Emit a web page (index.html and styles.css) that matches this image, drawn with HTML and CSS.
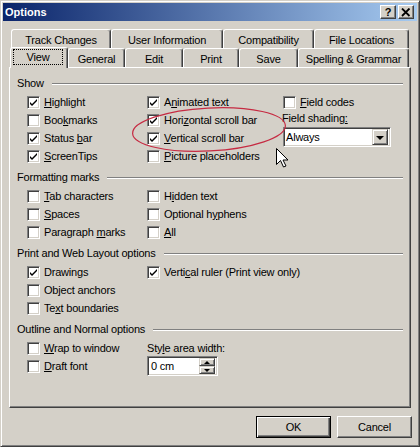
FILE: index.html
```html
<!DOCTYPE html>
<html>
<head>
<meta charset="utf-8">
<link rel="stylesheet" href="styles.css">
</head>
<body>
<div class="window">
  <div class="titlebar">
    <span class="title">Options</span>
    <div class="tbtns">
      <span class="tbtn q">?</span>
      <span class="tbtn"><svg width="10" height="9" viewBox="0 0 10 9"><path d="M1 0.5 L8.5 8 M8.5 0.5 L1 8" stroke="#000" stroke-width="1.8"/></svg></span>
    </div>
  </div>

  <div class="tabs">
    <div class="tabrow back">
      <div class="tab w-tc">Track Changes</div>
      <div class="tab w-ui">User Information</div>
      <div class="tab w-co">Compatibility</div>
      <div class="tab w-fl">File Locations</div>
    </div>
    <div class="tabrow front">
      <div class="tab sel w-vi"><span class="focus">View</span></div>
      <div class="tab w-ge">General</div>
      <div class="tab w-ed">Edit</div>
      <div class="tab w-pr">Print</div>
      <div class="tab w-sa">Save</div>
      <div class="tab w-sg">Spelling &amp; Grammar</div>
    </div>
  </div>

  <div class="panel">
    <div class="group">
      <div class="glabel"><span>Show</span></div>
      <div class="grid">
        <div class="col">
          <div class="cb"><span class="box on"><svg viewBox="0 0 11 11"><path d="M2 5 L4 7 L9 2 L9 4 L4 9 L2 7 Z"/></svg></span><span><u>H</u>ighlight</span></div>
          <div class="cb"><span class="box"></span><span>Boo<u>k</u>marks</span></div>
          <div class="cb"><span class="box on"><svg viewBox="0 0 11 11"><path d="M2 5 L4 7 L9 2 L9 4 L4 9 L2 7 Z"/></svg></span><span>Status <u>b</u>ar</span></div>
          <div class="cb"><span class="box on"><svg viewBox="0 0 11 11"><path d="M2 5 L4 7 L9 2 L9 4 L4 9 L2 7 Z"/></svg></span><span><u>S</u>creenTips</span></div>
        </div>
        <div class="col">
          <div class="cb"><span class="box on"><svg viewBox="0 0 11 11"><path d="M2 5 L4 7 L9 2 L9 4 L4 9 L2 7 Z"/></svg></span><span>A<u>n</u>imated text</span></div>
          <div class="cb"><span class="box on"><svg viewBox="0 0 11 11"><path d="M2 5 L4 7 L9 2 L9 4 L4 9 L2 7 Z"/></svg></span><span>Hori<u>z</u>ontal scroll bar</span></div>
          <div class="cb"><span class="box on"><svg viewBox="0 0 11 11"><path d="M2 5 L4 7 L9 2 L9 4 L4 9 L2 7 Z"/></svg></span><span><u>V</u>ertical scroll bar</span></div>
          <div class="cb"><span class="box"></span><span><u>P</u>icture placeholders</span></div>
        </div>
        <div class="col">
          <div class="cb c3"><span class="box"></span><span><u>F</u>ield codes</span></div>
          <div class="flabel">Field shading<u>:</u></div>
          <div class="select">
            <span class="seltext">Always</span>
            <span class="arrowbtn"><span class="tri"></span></span>
          </div>
        </div>
      </div>
    </div>

    <div class="group">
      <div class="glabel"><span>Formatting marks</span></div>
      <div class="grid">
        <div class="col">
          <div class="cb"><span class="box"></span><span><u>T</u>ab characters</span></div>
          <div class="cb"><span class="box"></span><span><u>S</u>paces</span></div>
          <div class="cb"><span class="box"></span><span>Paragraph <u>m</u>arks</span></div>
        </div>
        <div class="col">
          <div class="cb"><span class="box"></span><span>H<u>i</u>dden text</span></div>
          <div class="cb"><span class="box"></span><span>Optional h<u>y</u>phens</span></div>
          <div class="cb"><span class="box"></span><span><u>A</u>ll</span></div>
        </div>
      </div>
    </div>

    <div class="group">
      <div class="glabel"><span>Print and Web Layout options</span></div>
      <div class="grid">
        <div class="col">
          <div class="cb"><span class="box on"><svg viewBox="0 0 11 11"><path d="M2 5 L4 7 L9 2 L9 4 L4 9 L2 7 Z"/></svg></span><span>Drawin<u>g</u>s</span></div>
          <div class="cb"><span class="box"></span><span>Ob<u>j</u>ect anchors</span></div>
          <div class="cb"><span class="box"></span><span>Te<u>x</u>t boundaries</span></div>
        </div>
        <div class="col">
          <div class="cb"><span class="box on"><svg viewBox="0 0 11 11"><path d="M2 5 L4 7 L9 2 L9 4 L4 9 L2 7 Z"/></svg></span><span>Verti<u>c</u>al ruler (Print view only)</span></div>
        </div>
      </div>
    </div>

    <div class="group">
      <div class="glabel"><span>Outline and Normal options</span></div>
      <div class="grid">
        <div class="col">
          <div class="cb"><span class="box"></span><span><u>W</u>rap to window</span></div>
          <div class="cb"><span class="box"></span><span><u>D</u>raft font</span></div>
        </div>
        <div class="col">
          <div class="slabel">Sty<u>l</u>e area width:</div>
          <div class="spin">
            <span class="spintext">0 cm</span>
            <span class="spinbtns">
              <span class="sbtn"><span class="tri up"></span></span>
              <span class="sbtn"><span class="tri small"></span></span>
            </span>
          </div>
        </div>
      </div>
    </div>
  </div>

  <div class="buttons">
    <button class="btn default">OK</button>
    <button class="btn">Cancel</button>
  </div>

  <svg class="overlay" width="420" height="447" viewBox="0 0 420 447">
    <ellipse cx="209" cy="129.5" rx="76.5" ry="21.5" transform="rotate(-3 209 129.5)" fill="none" stroke="#C62a42" stroke-width="1.2"/>
    <path transform="translate(276.5 148.5)" d="M0 0 V16 L4 12 L7 18.5 L9.5 17.5 L6.5 11.5 H11.5 Z" fill="#fff" stroke="#000" stroke-width="1" stroke-linejoin="miter"/>
  </svg>
</div>
</body>
</html>
```

FILE: styles.css
```css
html, body {
  margin: 0;
  padding: 0;
  background: #D4D0C8;
}

.window {
  position: relative;
  box-sizing: border-box;
  width: 420px;
  height: 447px;
  background: #D4D0C8;
  border: 1px solid;
  border-color: #D4D0C8 #404040 #404040 #D4D0C8;
  box-shadow: inset 1px 1px #fff, inset -1px -1px #808080;
  padding: 2px;
  font-family: "Liberation Sans", Arial, sans-serif;
  font-size: 11px;
  letter-spacing: -0.2px;
  color: #000;
}

.titlebar {
  height: 18px;
  display: flex;
  align-items: center;
  justify-content: space-between;
  background: linear-gradient(to right, #0A246A, #A6CAF0);
  padding: 0 3px 0 2px;
}

.title {
  color: #fff;
  font-weight: bold;
  font-size: 11px;
  letter-spacing: 0;
}

.tbtns {
  display: flex;
  gap: 2px;
}

.tbtn {
  box-sizing: border-box;
  width: 16px;
  height: 14px;
  background: #D4D0C8;
  border: 1px solid;
  border-color: #fff #404040 #404040 #fff;
  box-shadow: inset -1px -1px #808080;
  display: flex;
  align-items: center;
  justify-content: center;
  font-weight: bold;
  font-size: 11px;
  line-height: 11px;
}

.tbtn svg {
  display: block;
}

.tabs {
  margin-top: 8px;
}

.tabrow {
  display: flex;
  height: 19px;
}

.tabrow.back {
  padding-left: 8px;
}

.tabrow.front {
  padding-left: 7px;
  align-items: flex-end;
}

.tab {
  box-sizing: border-box;
  height: 19px;
  display: flex;
  align-items: center;
  justify-content: center;
  border-top: 1px solid #fff;
  border-left: 1px solid #fff;
  border-right: 1px solid #404040;
  box-shadow: inset -1px 0 #808080;
  border-radius: 3px 3px 0 0;
  background: #D4D0C8;
  white-space: nowrap;
  flex: none;
}

.back .tab {
  padding-top: 2px;
}

.front .tab {
  padding-top: 1px;
}

.tab.sel {
  height: 21px;
  margin-bottom: -1px;
  position: relative;
  z-index: 2;
  align-items: flex-start;
  justify-content: flex-start;
  padding: 1px 0 0 2px;
}

.focus {
  box-sizing: border-box;
  width: 50px;
  height: 16px;
  border: 1px dotted #000;
  display: flex;
  align-items: center;
  justify-content: center;
}

.w-tc { width: 100px; }
.w-ui { width: 112px; }
.w-co { width: 91px; }
.w-fl { width: 95px; }
.w-vi { width: 58px; }
.w-ge { width: 57px; }
.w-ed { width: 58px; }
.w-pr { width: 56px; }
.w-sa { width: 59px; }
.w-sg { width: 111px; }

.panel {
  position: relative;
  z-index: 1;
  box-sizing: border-box;
  margin-left: 6px;
  width: 402px;
  height: 341px;
  border-top: 1px solid #fff;
  border-left: 1px solid #fff;
  border-right: 1px solid #404040;
  border-bottom: 1px solid #404040;
  box-shadow: inset -1px -1px #808080;
  padding: 9px 7px 0 7px;
}

.group {
  margin-bottom: 6px;
}

.glabel {
  display: flex;
  align-items: center;
  height: 13px;
  line-height: 13px;
  white-space: nowrap;
}

.glabel::after {
  content: "";
  flex: 1;
  height: 0;
  border-top: 1px solid #808080;
  border-bottom: 1px solid #fff;
  margin-left: 8px;
}

.grid {
  display: grid;
  grid-template-columns: 120px 135px 1fr;
  margin-top: 3px;
  padding-left: 10px;
}

.col {
  display: flex;
  flex-direction: column;
}

.cb {
  display: flex;
  align-items: center;
  height: 18px;
  white-space: nowrap;
}

.cb.c3 {
  margin-left: 1px;
}

.box {
  box-sizing: border-box;
  width: 13px;
  height: 13px;
  flex: none;
  background: #fff;
  border: 1px solid;
  border-color: #808080 #fff #fff #808080;
  box-shadow: inset 1px 1px #404040, inset -1px -1px #D4D0C8;
  margin-right: 4px;
}

.box svg {
  display: block;
  width: 11px;
  height: 11px;
  fill: #000;
}

.flabel {
  height: 14px;
  line-height: 14px;
  white-space: nowrap;
}

.select {
  box-sizing: border-box;
  width: 108px;
  height: 20px;
  margin-top: 2px;
  margin-left: 1px;
  border: 1px solid;
  border-color: #808080 #fff #fff #808080;
  box-shadow: inset 1px 1px #404040, inset -1px -1px #D4D0C8;
  background: #fff;
  display: flex;
  align-items: center;
  padding: 1px 2px 1px 2px;
}

.seltext {
  flex: 1;
  padding-left: 0;
}

.arrowbtn {
  box-sizing: border-box;
  width: 16px;
  height: 16px;
  background: #D4D0C8;
  border: 1px solid;
  border-color: #D4D0C8 #404040 #404040 #D4D0C8;
  box-shadow: inset 1px 1px #fff, inset -1px -1px #808080;
  display: flex;
  align-items: center;
  justify-content: center;
}

.tri {
  width: 0;
  height: 0;
  border-left: 4px solid transparent;
  border-right: 4px solid transparent;
  border-top: 4px solid #000;
  margin-top: 1px;
}

.tri.small {
  border-left-width: 3px;
  border-right-width: 3px;
  border-top-width: 3px;
  margin-top: 0;
}

.tri.up {
  border-left: 3px solid transparent;
  border-right: 3px solid transparent;
  border-top: 0;
  border-bottom: 3px solid #000;
  margin-top: 0;
}

.slabel {
  height: 18px;
  line-height: 18px;
  white-space: nowrap;
}

.spin {
  box-sizing: border-box;
  width: 71px;
  height: 20px;
  margin-top: -1px;
  border: 1px solid;
  border-color: #808080 #fff #fff #808080;
  box-shadow: inset 1px 1px #404040, inset -1px -1px #D4D0C8;
  background: #fff;
  display: flex;
  align-items: center;
  padding: 1px 2px 1px 3px;
}

.spintext {
  flex: 1;
}

.spinbtns {
  display: flex;
  flex-direction: column;
  width: 16px;
  height: 16px;
}

.sbtn {
  box-sizing: border-box;
  height: 8px;
  background: #D4D0C8;
  border: 1px solid;
  border-color: #D4D0C8 #404040 #404040 #D4D0C8;
  box-shadow: inset 1px 1px #fff, inset -1px -1px #808080;
  display: flex;
  align-items: center;
  justify-content: center;
}

.buttons {
  display: flex;
  justify-content: flex-end;
  gap: 6px;
  margin-top: 8px;
  padding-right: 5px;
}

.btn {
  box-sizing: border-box;
  width: 75px;
  height: 22px;
  background: #D4D0C8;
  border: 1px solid;
  border-color: #fff #404040 #404040 #fff;
  box-shadow: inset -1px -1px #808080;
  font-family: "Liberation Sans", Arial, sans-serif;
  font-size: 11px;
  letter-spacing: -0.2px;
  color: #000;
  padding: 0;
  margin: 0;
}

.btn.default {
  border: 1px solid #000;
  box-shadow: inset 1px 1px #fff, inset -1px -1px #404040, inset -2px -2px #808080;
}

.overlay {
  position: absolute;
  left: -1px;
  top: -1px;
  pointer-events: none;
  z-index: 5;
}
```
